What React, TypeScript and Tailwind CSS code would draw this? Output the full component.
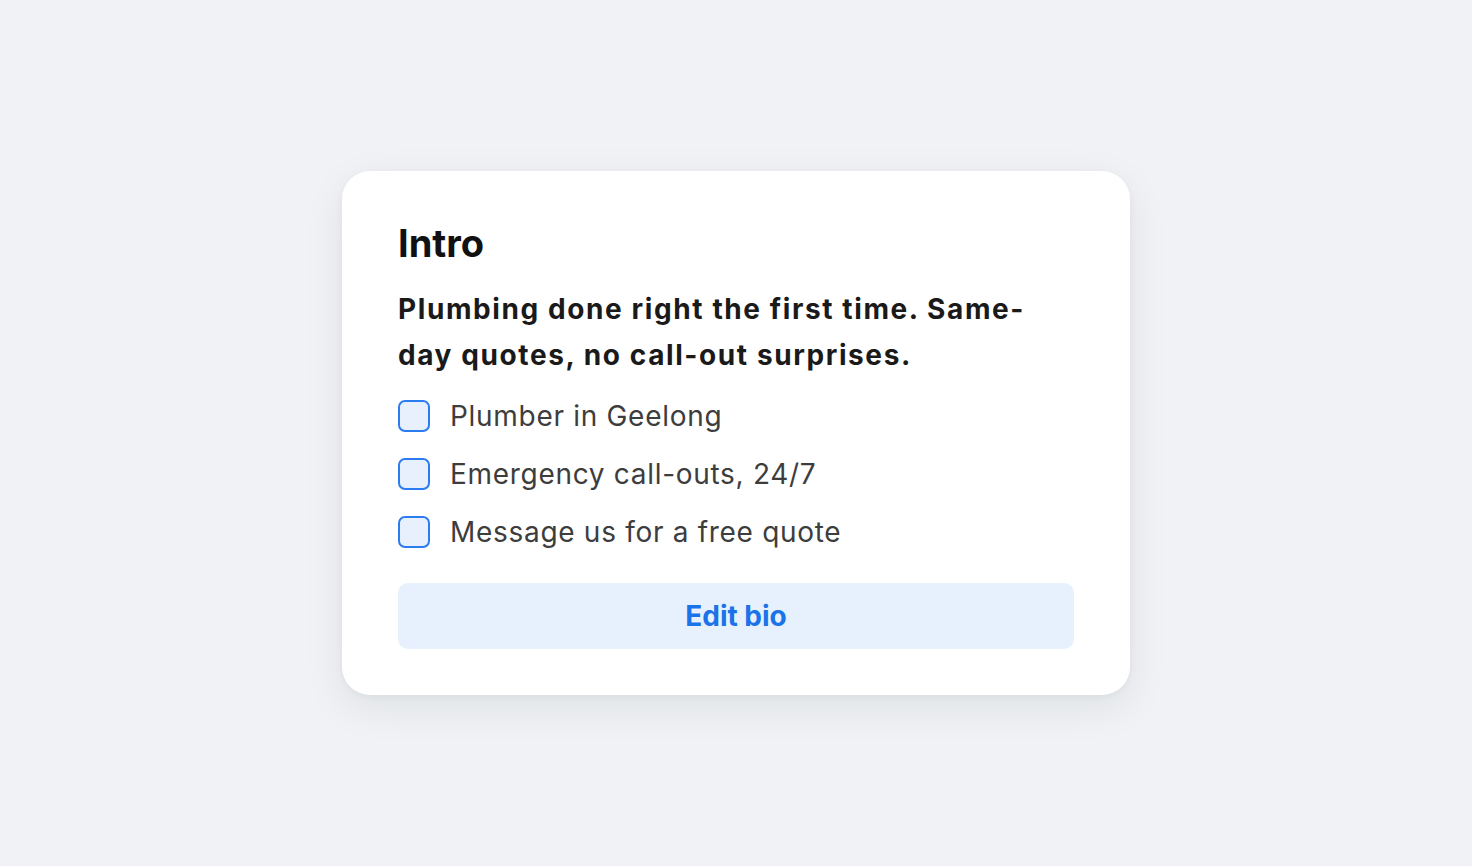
const items = ["Plumber in Geelong", "Emergency call-outs, 24/7", "Message us for a free quote"];

export default function App() {
  return (
    <div className="min-h-screen w-full bg-[#f0f2f5] flex items-center justify-center font-['Inter','Noto_Sans',sans-serif]">
      <div className="w-[788px] bg-white rounded-[28px] shadow-[0_12px_40px_rgba(15,23,42,0.08),0_2px_6px_rgba(15,23,42,0.04)] px-[56px] pt-[50px] pb-[46px]">
        <h2 className="text-[38px] leading-[44px] font-bold text-[#111111]">Intro</h2>
        <p className="mt-[21px] pr-[24px] text-[28px] leading-[46px] font-bold text-[#1a1a1a] tracking-[0.057em]">
          Plumbing done right the first time. Same-day quotes, no call-out surprises.
        </p>
        <ul className="mt-[22px] flex flex-col gap-[26px]">
          {items.map((t) => (
            <li key={t} className="flex items-center gap-[20px] h-[32px]">
              <span className="w-[32px] h-[32px] shrink-0 rounded-[7px] border-2 border-[#2b7cf0] bg-[#e8f0fd]" />
              <span className="text-[28px] text-[#3d3d3d] tracking-[0.025em]">{t}</span>
            </li>
          ))}
        </ul>
        <button className="mt-[35px] w-full h-[66px] rounded-[10px] bg-[#e7f0fd] text-[#1a73e8] text-[28px] font-bold">
          Edit bio
        </button>
      </div>
    </div>
  );
}
